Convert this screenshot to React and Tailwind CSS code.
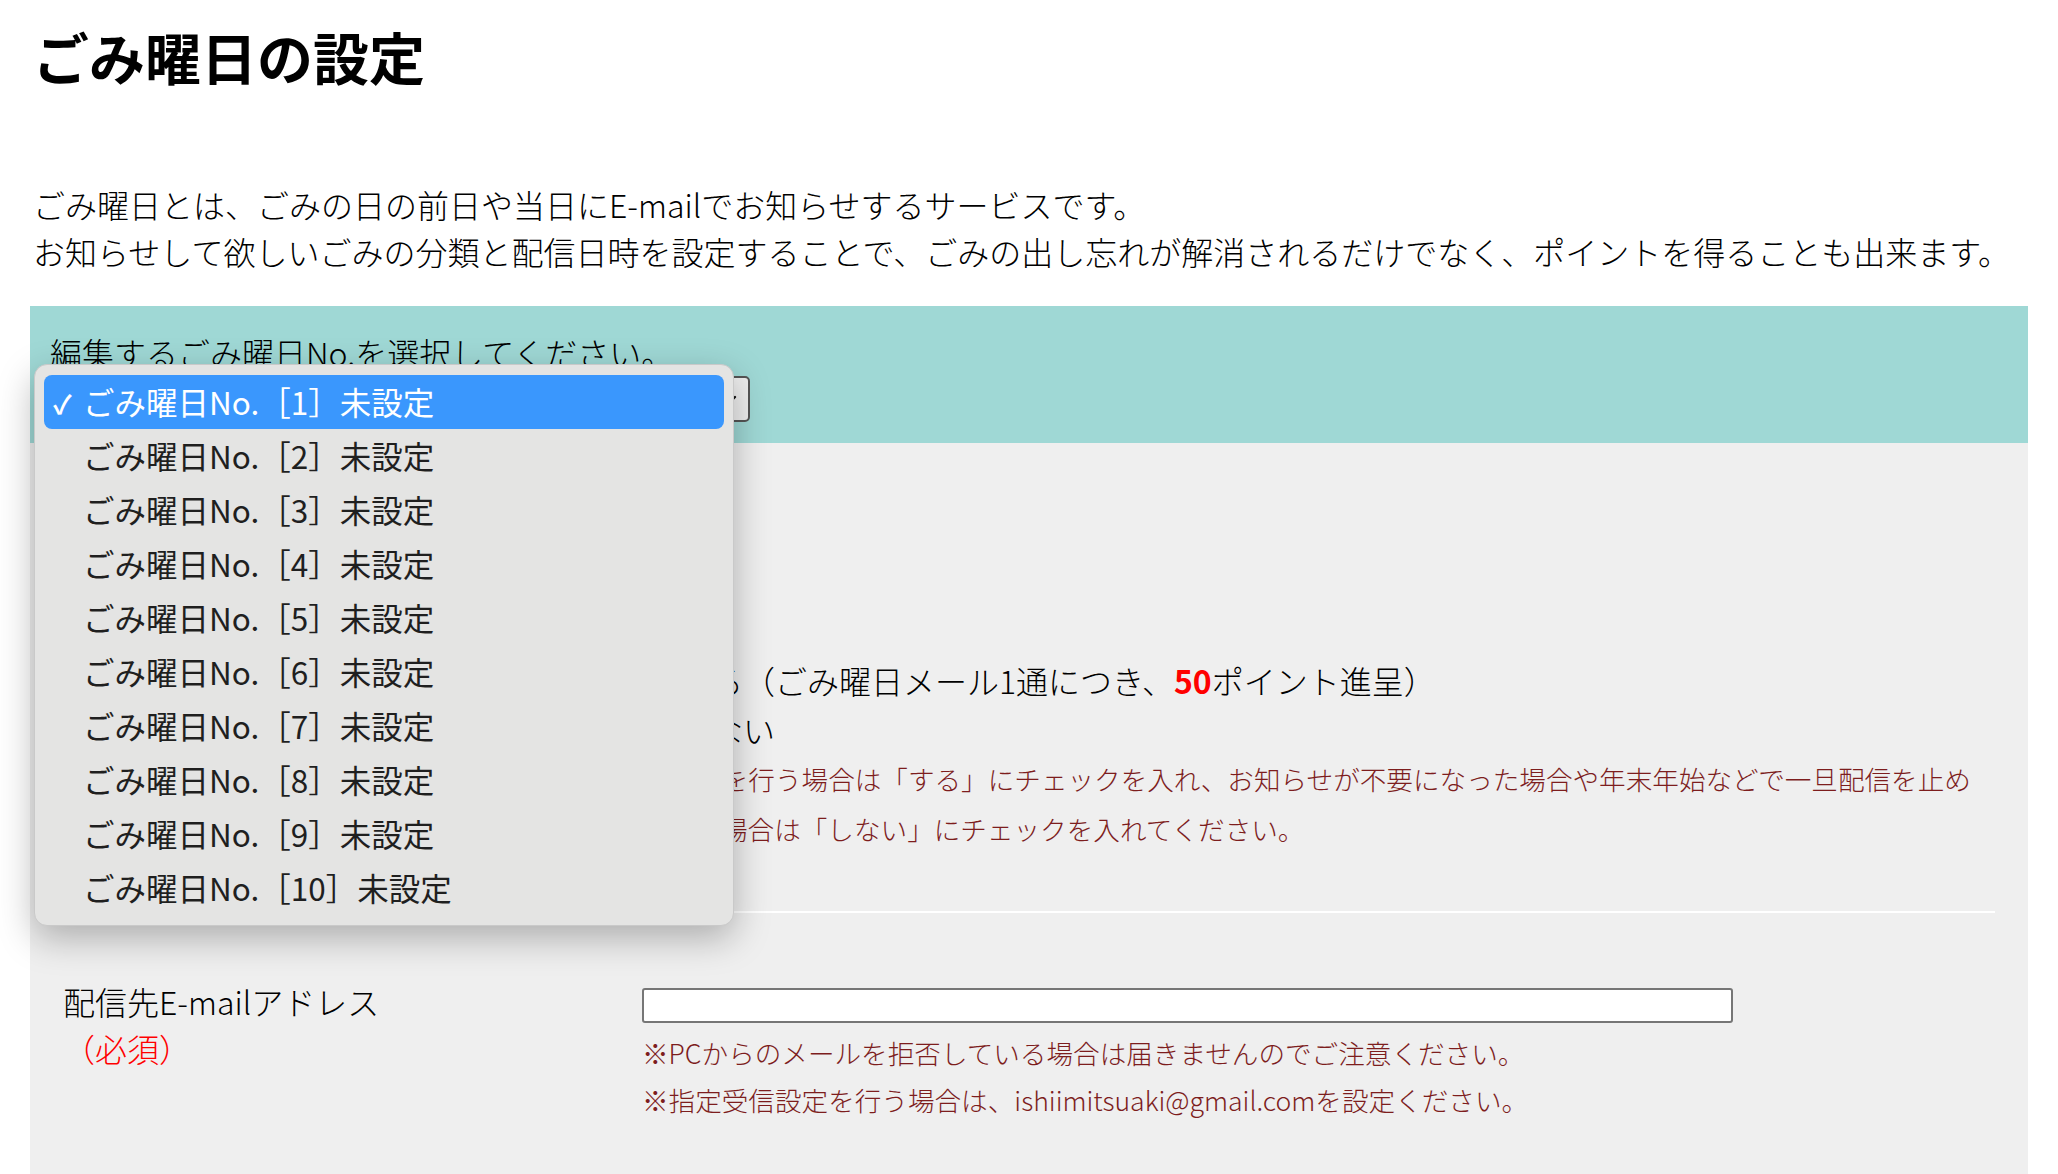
import React from 'react';

const options = [1, 2, 3, 4, 5, 6, 7, 8, 9, 10];

function Chevron() {
    return (
        <svg width="16" height="16" viewBox="0 0 16 16" fill="none">
            <path d="M3 6l5 5 5-5" stroke="#111" strokeWidth="2.4" strokeLinecap="round" strokeLinejoin="round" />
        </svg>
    );
}

export default function App() {
    return (
        <div className="min-h-screen bg-white text-black font-light font-['Noto_Sans_CJK_JP','Noto_Sans',sans-serif]">
            <div className="px-[30px] pb-[60px]">
                {/* Header */}
                <h1 className="pl-[3px] pt-[22px] text-[56px] font-bold leading-[67px]">ごみ曜日の設定</h1>
                <p className="mt-[92px] pl-[3px] text-[32px] leading-[47px]">
                    ごみ曜日とは、ごみの日の前日や当日にE-mailでお知らせするサービスです。
                    <br />
                    お知らせして欲しいごみの分類と配信日時を設定することで、ごみの出し忘れが解消されるだけでなく、ポイントを得ることも出来ます。
                </p>

                {/* Selector */}
                <div className="relative mt-[31px]">
                    <div className="bg-[#9fd8d5] pl-[20px] pt-[26px] pb-[21px]">
                        <div className="text-[32px] leading-[40px]">編集するごみ曜日No.を選択してください。</div>
                        <div className="mt-[4px] flex h-[46px] w-[700px] items-center justify-between rounded-[5px] border-2 border-[#555] bg-[#efefef] pl-[14px] pr-[10px] text-[31px]">
                            <span>ごみ曜日No.［1］未設定</span>
                            <Chevron />
                        </div>
                    </div>

                    {/* Open dropdown */}
                    <div className="absolute left-[4px] top-[58px] z-10 w-[700px] rounded-[13px] border border-[#c9c9c9] bg-[#e4e4e3] px-[9px] pt-[10px] pb-[10px] shadow-[0_12px_36px_rgba(0,0,0,0.28)]">
                        {options.map((n) => {
                            const selected = n === 1;
                            return (
                                <div
                                    key={n}
                                    className={
                                        selected
                                            ? 'flex h-[54px] items-center rounded-[8px] bg-[#3a97fd] pl-[9px] text-[31.5px] font-normal text-white'
                                            : 'flex h-[54px] items-center pl-[9px] text-[31.5px] font-normal text-[#1f1f1f]'
                                    }
                                >
                                    <span className="w-[30px] text-[26px] font-bold">{selected ? '✓' : ''}</span>
                                    <span>ごみ曜日No.［{n}］未設定</span>
                                </div>
                            );
                        })}
                    </div>

                    {/* Form */}
                    <div className="bg-[#efefef] px-[33px] pt-[213px] pb-[80px]">
                        <div className="grid grid-cols-[579px_1fr]">
                            <div className="text-[32px] leading-[49px]">配信設定</div>
                            <div>
                                <label className="flex items-center gap-[11px] text-[32px] leading-[49px]">
                                    <span className="h-[26px] w-[26px] rounded-full border-2 border-[#767676] bg-white"></span>
                                    <span>
                                        する（ごみ曜日メール1通につき、<span className="font-bold text-[#ff0000]">50</span>ポイント進呈）
                                    </span>
                                </label>
                                <label className="flex items-center gap-[11px] text-[32px] leading-[49px]">
                                    <span className="h-[26px] w-[26px] rounded-full border-2 border-[#767676] bg-white"></span>
                                    <span>しない</span>
                                </label>
                                <p className="text-[26.6px] leading-[50px] text-[#7d1d1d]">
                                    ※配信を行う場合は「する」にチェックを入れ、お知らせが不要になった場合や年末年始などで一旦配信を止め
                                    <br />
                                    ておく場合は「しない」にチェックを入れてください。
                                </p>
                            </div>
                        </div>

                        <div className="mt-[57px] h-[2px] bg-white"></div>

                        <div className="mt-[65px] grid grid-cols-[579px_1fr]">
                            <div className="text-[32px] leading-[47px]">
                                <div>配信先E-mailアドレス</div>
                                <div className="text-[#ff0000]">（必須）</div>
                            </div>
                            <div>
                                <div className="mt-[10px] h-[35px] w-[1091px] rounded-[3px] border-2 border-[#767676] bg-white"></div>
                                <p className="mt-[6px] text-[26.6px] leading-[47px] text-[#7d1d1d]">
                                    ※PCからのメールを拒否している場合は届きませんのでご注意ください。
                                    <br />
                                    ※指定受信設定を行う場合は、ishiimitsuaki@gmail.comを設定ください。
                                </p>
                            </div>
                        </div>
                    </div>
                </div>
            </div>
        </div>
    );
}
